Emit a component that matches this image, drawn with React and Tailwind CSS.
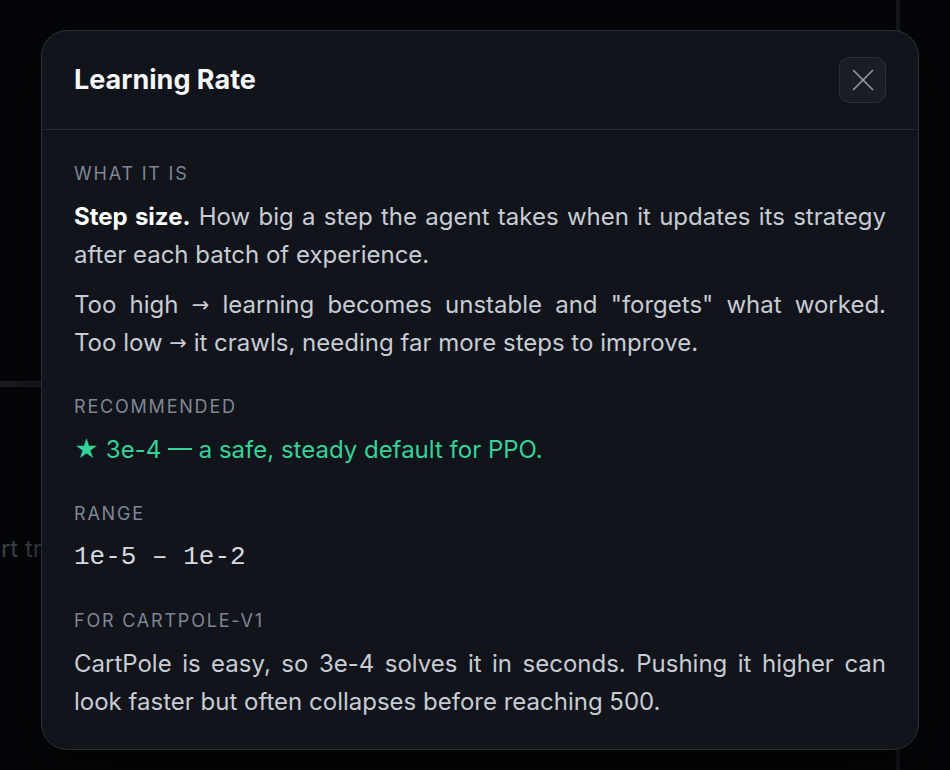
import React from "react";

const sans = { fontFamily: '"Inter", "Noto Sans", sans-serif' };
const arrowFont = { fontFamily: '"DejaVu Sans", sans-serif' };

function Label({ children }) {
  return (
    <div className="text-[18px] leading-[24px] tracking-[0.1em] uppercase text-[#7f8794] mb-[12px]">
      {children}
    </div>
  );
}

function Arrow() {
  return (
    <span className="text-[21px] leading-none align-[1px] text-[#c7ccd5]" style={arrowFont}>
      →
    </span>
  );
}

function CloseIcon() {
  return (
    <svg width="22" height="22" viewBox="0 0 22 22" fill="none" stroke="#959ca7" strokeWidth="1.6" strokeLinecap="round">
      <path d="M1.5 1.5 L20.5 20.5" />
      <path d="M20.5 1.5 L1.5 20.5" />
    </svg>
  );
}

export default function App() {
  return (
    <div className="relative w-[950px] h-[770px] overflow-hidden bg-[#050609]" style={sans}>
      {/* dimmed app behind the dialog */}
      <div className="absolute left-[896px] top-0 w-[4px] h-full bg-[#14161b]" />
      <div className="absolute left-0 top-[381px] w-[60px] h-[6px] bg-[#1a1c21]" />
      <div className="absolute left-0 top-[534px] w-[41px] h-[30px] overflow-hidden">
        <div className="absolute right-[-69px] top-0 text-[24px] leading-[30px] text-[#40454d] whitespace-nowrap">
          Start training
        </div>
      </div>

      {/* dialog */}
      <div className="absolute left-[41px] top-[30px] w-[878px] rounded-[26px] border border-[#2a2f39] bg-[#11141a] shadow-[0_20px_60px_rgba(0,0,0,0.6)]">
        <div className="flex items-center justify-between px-8 pt-[26px] pb-[26px] border-b border-[#262b34]">
          <h2 className="text-[27px] leading-[32px] font-bold text-[#f5f6f8]">Learning Rate</h2>
          <button className="w-[47px] h-[46px] rounded-[10px] border border-[#2b303a] bg-[#1a1d24] flex items-center justify-center">
            <CloseIcon />
          </button>
        </div>

        <div className="px-8 pt-[32px] pb-[28px] flex flex-col gap-[33px]">
          <section>
            <Label>What it is</Label>
            <p className="text-[24px] leading-[38px] text-[#c7ccd5] text-justify">
              <strong className="font-bold text-white">Step size.</strong> How big a step the agent takes when it
              updates its strategy after each batch of experience.
            </p>
            <p className="mt-[12px] text-[24px] leading-[38px] text-[#c7ccd5]">
              <span className="block text-justify [text-align-last:justify]">
                Too high <Arrow /> learning becomes unstable and "forgets" what worked.
              </span>
              <span className="block">
                Too low <Arrow /> it crawls, needing far more steps to improve.
              </span>
            </p>
          </section>

          <section>
            <Label>Recommended</Label>
            <p className="text-[24px] leading-[38px] text-[#34d399]">★ 3e-4 — a safe, steady default for PPO.</p>
          </section>

          <section>
            <Label>Range</Label>
            <p
              className="text-[26px] leading-[38px] text-[#d5d9e0]"
              style={{ fontFamily: '"Liberation Mono", "DejaVu Sans Mono", monospace' }}
            >
              1e-5 – 1e-2
            </p>
          </section>

          <section>
            <Label>For CartPole-v1</Label>
            <p className="text-[24px] leading-[38px] text-[#c7ccd5] text-justify">
              CartPole is easy, so 3e-4 solves it in seconds. Pushing it higher can look faster but often collapses
              before reaching 500.
            </p>
          </section>
        </div>
      </div>
    </div>
  );
}
